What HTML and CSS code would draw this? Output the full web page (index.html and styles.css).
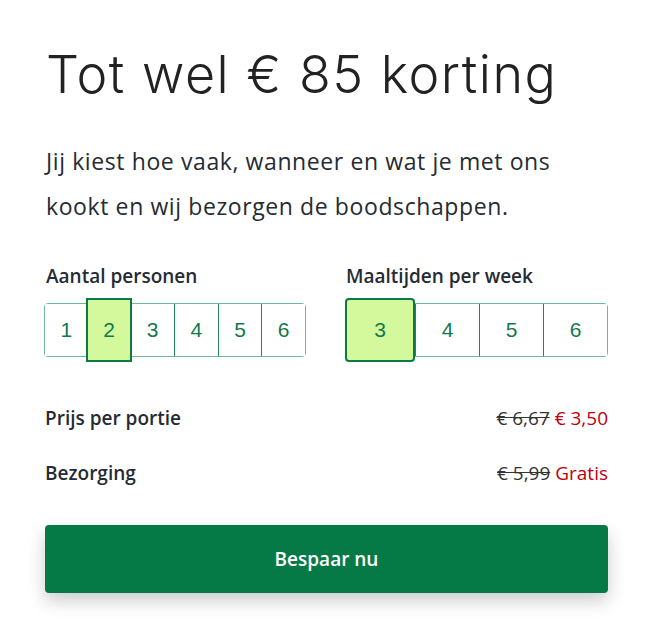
FILE: index.html
```html
<!DOCTYPE html>
<html lang="nl">
<head>
<meta charset="utf-8">
<title>Korting</title>
<link rel="stylesheet" href="styles.css">
</head>
<body>
<main class="card">
  <h1 class="title">Tot wel € 85 korting</h1>
  <p class="intro">Jij kiest hoe vaak, wanneer en wat je met ons kookt en wij bezorgen de boodschappen.</p>
  <div class="pickers">
    <div class="picker picker-persons">
      <div class="label">Aantal personen</div>
      <div class="options">
        <button class="opt">1</button>
        <button class="opt sel">2</button>
        <button class="opt">3</button>
        <button class="opt">4</button>
        <button class="opt">5</button>
        <button class="opt">6</button>
      </div>
    </div>
    <div class="picker picker-meals">
      <div class="label">Maaltijden per week</div>
      <div class="options">
        <button class="opt sel">3</button>
        <button class="opt">4</button>
        <button class="opt">5</button>
        <button class="opt">6</button>
      </div>
    </div>
  </div>
  <div class="rows">
    <div class="row">
      <span class="row-label">Prijs per portie</span>
      <span class="price"><s class="old">€ 6,67</s> <span class="new">€ 3,50</span></span>
    </div>
    <div class="row">
      <span class="row-label">Bezorging</span>
      <span class="price"><s class="old">€ 5,99</s> <span class="new">Gratis</span></span>
    </div>
  </div>
  <button class="cta">Bespaar nu</button>
</main>
</body>
</html>
```
FILE: styles.css
```css
html, body {
  margin: 0;
  padding: 0;
  background: #fff;
}
body {
  font-family: "Open Sans", Lato, sans-serif;
  color: #262b33;
}
.card {
  width: 563px;
  margin-left: 45px;
  padding-top: 42px;
  padding-bottom: 40px;
}
.title {
  font-family: Inter, sans-serif;
  font-weight: 300;
  font-size: 52px;
  letter-spacing: 1.5px;
  line-height: 66px;
  margin: 0 0 0 1px;
  color: #222;
}
.intro {
  font-size: 23px;
  letter-spacing: 0.6px;
  line-height: 45px;
  margin: 31px 0 0 1px;
  width: 540px;
}
.pickers {
  display: flex;
  justify-content: space-between;
  margin-top: 35px;
}
.picker {
  display: flex;
  flex-direction: column;
}
.label {
  font-weight: 600;
  font-size: 19px;
  line-height: 24px;
  margin-left: 1px;
}
.options {
  display: flex;
  margin-top: 15px;
  height: 54px;
  border: 1px solid #6fb993;
  border-radius: 4px;
  box-sizing: border-box;
}
.picker-persons .options { width: 262px; margin-left: -1px; }
.picker-meals .options { width: 263px; }
.opt {
  flex: 1;
  border: none;
  border-left: 1px solid #1f8a57;
  background: #fff;
  font-family: "Liberation Sans", Arial, sans-serif;
  font-size: 21px;
  color: #117a4b;
  padding: 0;
}
.opt:first-child { border-left: none; }
.opt.sel {
  background: #d4f89c;
  border: 2px solid #0b7a45;
  margin: -6px -2px;
  position: relative;
}
.picker-meals .opt.sel {
  flex: 0 0 70px;
  margin: -6px 0 -6px -1px;
  border-radius: 4px;
}
.rows {
  margin-top: 33px;
}
.row {
  display: flex;
  justify-content: space-between;
  align-items: center;
  font-size: 19px;
  height: 55px;
}
.row-label { font-weight: 600; }
.old { color: #333; }
.new { color: #c0000d; }
.cta {
  display: block;
  width: 100%;
  height: 68px;
  margin-top: 25px;
  border: none;
  border-radius: 4px;
  background: #067a46;
  color: #fff;
  font-family: "Open Sans", sans-serif;
  font-weight: 600;
  font-size: 19px;
  box-shadow: 0 8px 18px rgba(0,0,0,0.2);
}
```
